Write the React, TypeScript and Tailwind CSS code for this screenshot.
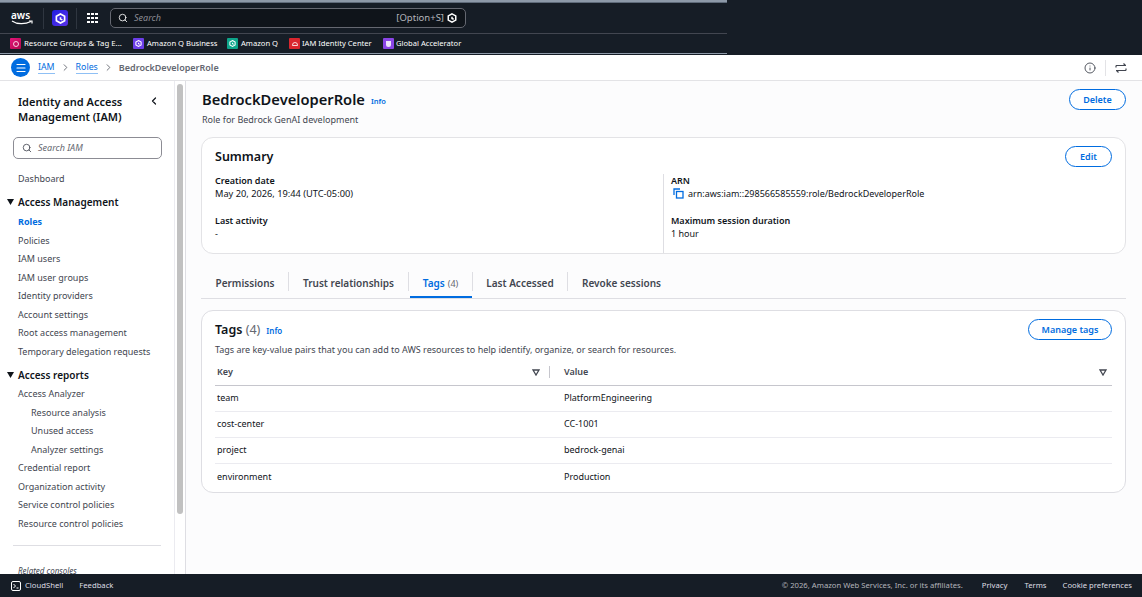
import React from "react";
import { ChevronRight, ChevronLeft, Search, Menu, Info } from "lucide-react";

const Sq = ({ c, children }: { c: string; children?: React.ReactNode }) => (
  <span className={`w-[11px] h-[11px] rounded-[1px] flex items-center justify-center shrink-0 ${c}`}>{children}</span>
);
const QMark = ({ s = 7 }: { s?: number }) => (
  <svg width={s} height={s} viewBox="0 0 12 12" fill="none" stroke="white" strokeWidth="1.8">
    <path d="M6 1 10.5 3.5V8.5L6 11 1.5 8.5V3.5Z" />
    <path d="M6 4.5V6.5L8 7.5" />
  </svg>
);
const FilterTri = () => (
  <svg width="8" height="7" viewBox="0 0 8 7" fill="none" stroke="#424650" strokeWidth="1.3"><path d="M1 1H7L4 6Z" /></svg>
);
const Btn = ({ label, w }: { label: string; w: string }) => (
  <button className={`h-[21px] ${w} rounded-full border-[1.5px] border-[#006ce0] text-[#006ce0] text-[9px] font-semibold flex items-center justify-center shrink-0 bg-white`}>{label}</button>
);
const NavItem = ({ label, active, sub }: { label: string; active?: boolean; sub?: boolean }) => (
  <div className={`h-[18.5px] flex items-center text-[9px] ${sub ? "pl-[31px]" : "pl-[18px]"} ${active ? "text-[#006ce0] font-bold" : "text-[#424650]"}`}>{label}</div>
);
const NavHead = ({ label }: { label: string }) => (
  <div className="h-[18.5px] flex items-center pl-[7px] gap-[4px] text-[10px] font-semibold text-[#0f141a]">
    <svg width="7" height="6" viewBox="0 0 7 6" fill="#0f141a"><path d="M0 0H7L3.5 6Z" /></svg>
    <span>{label}</span>
  </div>
);
const Tab = ({ label, active, count, w }: { label: string; active?: boolean; count?: string; w: string }) => (
  <div className={`relative h-[29px] ${w} flex items-center justify-center text-[10px] font-semibold ${active ? "text-[#006ce0]" : "text-[#424650]"}`}>
    <span>{label}</span>
    {count && <span className="ml-[3px] font-normal text-[#656871] text-[9px]">{count}</span>}
    {active && <span className="absolute left-[1px] right-0 bottom-0 h-[2px] bg-[#006ce0]" />}
  </div>
);
const TabSep = () => <div className="w-px h-[19px] bg-[#dedee3] mb-[4px]" />;
const Row = ({ k, v, last }: { k: string; v: string; last?: boolean }) => (
  <div className={`flex items-center h-[26px] text-[9px] text-[#0f141a] ${last ? "" : "border-b border-[#ebebf0]"}`}>
    <div className="w-[349px] pl-[2px]">{k}</div>
    <div>{v}</div>
  </div>
);

export default function App() {
  return (
    <div className="w-[1142px] h-[597px] flex flex-col overflow-hidden bg-white font-['Noto_Sans','Open_Sans',sans-serif]">
      <header className="h-[55px] bg-[#161d26] flex shrink-0">
        <div className="w-[727px] flex flex-col h-[54px]">
          <div className="h-[3px] bg-[#8d99a8] border-b border-[#5f6b7a]" />
          <div className="h-[31px] flex items-center border-b border-[#424650]">
            <div className="w-[43px] pl-[11px] text-white text-[10px] leading-[9px] font-semibold flex flex-col shrink-0">
              <span>aws</span>
              <svg width="22" height="5" viewBox="0 0 22 5" fill="none" stroke="white" strokeWidth="1.2"><path d="M1 1C6 4.5 14 4.5 20 1.5" /><path d="M18 1H21V3.5" /></svg>
            </div>
            <div className="w-px h-[21px] bg-[#2f3640]" />
            <div className="w-[16px] h-[16px] ml-[8px] rounded-[3px] bg-gradient-to-br from-[#1c1ce0] to-[#5a30e8] flex items-center justify-center shrink-0"><QMark s={11} /></div>
            <div className="w-px h-[21px] bg-[#2f3640] ml-[8px]" />
            <div className="ml-[10px] grid grid-cols-3 gap-[1.5px] w-[11px] shrink-0">
              {Array.from({ length: 9 }).map((_, i) => <span key={i} className="w-[2.6px] h-[2.6px] bg-white" />)}
            </div>
            <div className="ml-[12px] w-[356px] h-[20px] rounded-[5px] border border-[#656871] bg-[#0f141a] flex items-center pl-[7px] pr-[8px] text-[9.5px] text-[#b4b4bb]">
              <Search size={10} className="text-white" strokeWidth={2} />
              <span className="ml-[6px] italic text-[9px] text-[#8c8c94]">Search</span>
              <span className="ml-auto mr-[3px]">[Option+S]</span>
              <QMark s={10} />
            </div>
          </div>
          <div className="flex-1 flex items-center pl-[10px] text-[7.6px] text-white border-b border-[#8d99a8]">
            <Sq c="bg-gradient-to-br from-[#e7157b] to-[#b0084d]"><span className="w-[6px] h-[6px] rounded-full border border-white/80" /></Sq><span className="ml-[3px] w-[109px] text-[7.8px]">Resource Groups &amp; Tag E...</span>
            <Sq c="bg-[#6b3ee8]"><QMark /></Sq><span className="ml-[3px] w-[80px]">Amazon Q Business</span>
            <Sq c="bg-[#0ea58a]"><QMark /></Sq><span className="ml-[3px] w-[48px]">Amazon Q</span>
            <Sq c="bg-[#d9262e]"><span className="w-[6px] h-[4px] rounded-t-full border border-white/80" /></Sq><span className="ml-[2px] w-[81px]">IAM Identity Center</span>
            <Sq c="bg-[#8a45e6]"><span className="w-[5px] h-[6px] rounded-b-full bg-white/85" /></Sq><span className="ml-[2px]">Global Accelerator</span>
          </div>
        </div>
      </header>

      <div className="h-[26px] shrink-0 flex items-center border-b border-[#e3e3e6] bg-white text-[8.8px] pl-[11px] pr-[15px]">
        <div className="w-[19px] h-[19px] rounded-full bg-[#006ce0] flex items-center justify-center"><Menu size={12} className="text-white" strokeWidth={2.2} /></div>
        <span className="ml-[8px] text-[#006ce0] border-b border-[#8fc0f5] leading-[11px]">IAM</span>
        <ChevronRight size={11} className="text-[#656871] mx-[5px]" />
        <span className="text-[#006ce0] border-b border-[#8fc0f5] leading-[11px]">Roles</span>
        <ChevronRight size={11} className="text-[#656871] mx-[5px]" />
        <span className="text-[#656871] text-[9px] font-semibold">BedrockDeveloperRole</span>
        <Info size={12} className="ml-auto text-[#424650]" strokeWidth={1.8} />
        <div className="w-px h-[16px] bg-[#e3e3e6] mx-[9px]" />
        <svg width="12" height="12" viewBox="0 0 12 12" fill="none" stroke="#424650" strokeWidth="1.2">
          <path d="M1 3.5H11M8.5 1.5 10.5 3.5M1 3.5V5.5M3.5 10.5 1.5 8.5 M1 8.5H11M11 8.5V6.5" />
        </svg>
      </div>

      <div className="flex-1 min-h-0 flex">
        <aside className="w-[186px] shrink-0 flex border-r border-[#dedee3] bg-white overflow-hidden">
          <div className="w-[175px] shrink-0 border-r border-[#ebebf0]">
            <div className="flex items-start pl-[18px] pr-[14px] pt-[13px]">
              <div className="flex-1 text-[11px] leading-[15px] font-semibold text-[#0f141a]">Identity and Access Management (IAM)</div>
              <ChevronLeft size={12} className="text-[#0f141a] mt-[1px]" strokeWidth={2.4} />
            </div>
            <div className="ml-[13px] mr-[12px] mt-[13px] h-[22px] rounded-[5px] border border-[#8c8c94] flex items-center pl-[8px] text-[9px]">
              <Search size={10} className="text-[#424650]" />
              <span className="ml-[6px] italic text-[#656871]">Search IAM</span>
            </div>
            <div className="mt-[10px]"><NavItem label="Dashboard" /></div>
            <div className="mt-[5.5px] mb-[1px]"><NavHead label="Access Management" /></div>
            <NavItem label="Roles" active />
            <NavItem label="Policies" />
            <NavItem label="IAM users" />
            <NavItem label="IAM user groups" />
            <NavItem label="Identity providers" />
            <NavItem label="Account settings" />
            <NavItem label="Root access management" />
            <NavItem label="Temporary delegation requests" />
            <div className="mt-[5.5px]"><NavHead label="Access reports" /></div>
            <NavItem label="Access Analyzer" />
            <NavItem label="Resource analysis" sub />
            <NavItem label="Unused access" sub />
            <NavItem label="Analyzer settings" sub />
            <NavItem label="Credential report" />
            <NavItem label="Organization activity" />
            <NavItem label="Service control policies" />
            <NavItem label="Resource control policies" />
            <div className="mx-[13px] mt-[12px] border-t border-[#dedee3]" />
            <div className="pl-[18px] mt-[19px] text-[8px] italic text-[#424650]">Related consoles</div>
          </div>
          <div className="flex-1 pt-[3px] flex justify-center">
            <div className="w-[6px] h-[430px] rounded-full bg-[#c1c1c1]" />
          </div>
        </aside>

        <main className="flex-1 min-w-0 bg-[#fcfcfd] pl-[15px] pr-[16px] overflow-hidden">
          <div className="flex items-start justify-between pt-[8px] h-[56px]">
            <div className="pl-[1px]">
              <div className="flex items-center">
                <h1 className="text-[14.7px] leading-[21px] font-semibold text-[#0f141a]">BedrockDeveloperRole</h1>
                <span className="ml-[6px] mt-[4px] text-[7.5px] font-semibold text-[#006ce0]">Info</span>
              </div>
              <p className="text-[9px] leading-[13px] mt-[3px] text-[#424650]">Role for Bedrock GenAI development</p>
            </div>
            <Btn label="Delete" w="w-[57px]" />
          </div>

          <section className="h-[117px] rounded-[12px] border border-[#e3e3e6] bg-white pl-[13px] pr-[13px] pt-[8px]">
            <div className="flex items-start justify-between h-[22px]">
              <h2 className="text-[12.5px] leading-[22px] font-semibold text-[#0f141a]">Summary</h2>
              <Btn label="Edit" w="w-[47px]" />
            </div>
            <div className="flex mt-[6px] h-[79px]">
              <div className="w-[449px] border-r border-[#dedee3] text-[9px] leading-[13px] text-[#0f141a]">
                <div className="font-semibold">Creation date</div>
                <div className="text-[9.25px]">May 20, 2026, 19:44 (UTC-05:00)</div>
                <div className="font-semibold mt-[14px]">Last activity</div>
                <div>-</div>
              </div>
              <div className="pl-[7px] text-[9px] leading-[13px] text-[#0f141a]">
                <div className="font-semibold">ARN</div>
                <div className="flex items-center">
                  <svg width="11" height="11" viewBox="0 0 11 11" fill="none" stroke="#006ce0" strokeWidth="1.3" className="ml-[2px] mr-[4px]"><path d="M7 1H1V7" /><rect x="3.5" y="3.5" width="6.5" height="6.5" /></svg>
                  <span>arn:aws:iam::298566585559:role/BedrockDeveloperRole</span>
                </div>
                <div className="font-semibold mt-[14px]">Maximum session duration</div>
                <div>1 hour</div>
              </div>
            </div>
          </section>

          <div className="mt-[15px] flex items-center border-b border-[#dedee3] h-[30px] pl-[1px]">
            <Tab label="Permissions" w="w-[86px]" />
            <TabSep />
            <Tab label="Trust relationships" w="w-[119px]" />
            <TabSep />
            <Tab label="Tags" count="(4)" active w="w-[63px]" />
            <TabSep />
            <Tab label="Last Accessed" w="w-[94px]" />
            <TabSep />
            <Tab label="Revoke sessions" w="w-[107px]" />
          </div>

          <section className="mt-[11px] h-[183px] rounded-[12px] border border-[#dedee3] bg-white pl-[13px] pr-[13px] pt-[8px]">
            <div className="flex items-start justify-between h-[21px]">
              <div className="flex items-center mt-[1px]">
                <h2 className="text-[12.5px] leading-[20px] font-semibold text-[#0f141a]">Tags <span className="font-normal text-[#656871]">(4)</span></h2>
                <span className="ml-[6px] mt-[2px] text-[8px] font-semibold text-[#006ce0]">Info</span>
              </div>
              <Btn label="Manage tags" w="w-[84px]" />
            </div>
            <p className="text-[9px] leading-[13px] mt-[3px] text-[#424650]">Tags are key-value pairs that you can add to AWS resources to help identify, organize, or search for resources.</p>
            <div className="flex items-center h-[26px] mt-[3.5px] border-b border-[#c6c6cd] text-[9px] font-semibold text-[#424650]">
              <div className="w-[325px] pl-[2px] flex items-center justify-between">
                <span>Key</span><FilterTri />
              </div>
              <div className="w-px h-[12px] bg-[#c6c6cd] ml-[9px] mr-[14px]" />
              <div className="flex-1 flex items-center justify-between pr-[5px]">
                <span>Value</span><FilterTri />
              </div>
            </div>
            <Row k="team" v="PlatformEngineering" />
            <Row k="cost-center" v="CC-1001" />
            <Row k="project" v="bedrock-genai" />
            <Row k="environment" v="Production" last />
          </section>
        </main>
      </div>

      <footer className="h-[23px] shrink-0 bg-[#161d26] flex items-center pl-[11px] pr-[10px] text-[7.7px] text-[#dedee3]">
        <svg width="10" height="10" viewBox="0 0 10 10" fill="none" stroke="white" strokeWidth="1"><rect x=".5" y=".5" width="9" height="9" rx="1.5" /><path d="M2.5 3 4.5 5 2.5 7M5.5 7H7.5" /></svg>
        <span className="ml-[4px]">CloudShell</span>
        <span className="ml-[16px]">Feedback</span>
        <span className="ml-auto text-[#b4b4bb]">© 2026, Amazon Web Services, Inc. or its affiliates.</span>
        <span className="ml-[19px]">Privacy</span>
        <span className="ml-[17px]">Terms</span>
        <span className="ml-[16px]">Cookie preferences</span>
      </footer>
    </div>
  );
}
